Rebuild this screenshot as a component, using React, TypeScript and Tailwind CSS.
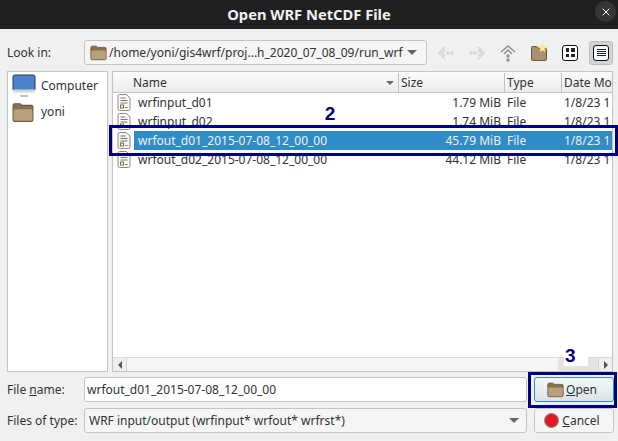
import React from 'react'
import { X } from 'lucide-react'

const files = [
  { name: 'wrfinput_d01', size: '1.79 MiB' },
  { name: 'wrfinput_d02', size: '1.74 MiB' },
  { name: 'wrfout_d01_2015-07-08_12_00_00', size: '45.79 MiB', selected: true },
  { name: 'wrfout_d02_2015-07-08_12_00_00', size: '44.12 MiB' },
]

const FolderIcon: React.FC<{ className?: string }> = ({ className }) => (
  <svg className={className} viewBox="0 0 20 20">
    <path d="M1 17V4q0-1.500 1.500-1.500h5L9 4h8.500Q19 4 19 5.500V17q0 1.500-1.500 1.500h-15Q1 18.500 1 17z" fill="#86704e" stroke="#6b5638" />
    <path d="M1.500 9q0-1.500 1.500-1.500h14q1.500 0 1.500 1.500v8q0 1-1 1h-15q-1 0-1-1z" fill="#b8a17d" />
  </svg>
)

const FileIcon: React.FC<{ light?: boolean }> = ({ light }) => (
  <svg className="w-[14px] h-[17px] shrink-0" viewBox="0 0 14 17">
    <path d="M1 2q0-1.500 1.500-1.500h7L13 4v11q0 1.500-1.500 1.500h-9Q1 16.500 1 15z" fill={light ? '#f4f4f4' : '#fbfbfb'} stroke="#8c8c8c" />
    <path d="M3.500 4h5M3.500 6.500h7M3.500 9h7" stroke="#777" strokeWidth="1" />
    <rect x="3.500" y="11" width="3" height="3" fill="none" stroke="#8a6a20" />
    <path d="M8 13.500h2.500" stroke="#777" />
  </svg>
)

const DropArrow = () => <span className="w-0 h-0 border-x-[5px] border-x-transparent border-t-[5px] border-t-[#666]" />

const Label: React.FC<{ children: React.ReactNode }> = ({ children }) => (
  <div className="w-[78px] shrink-0 text-[#2e3436]">{children}</div>
)

export default function App() {
  return (
    <div
      className="relative w-[618px] h-[441px] overflow-hidden flex flex-col bg-[#f0f0f0] text-[12px] text-[#2e3436]"
      style={{ fontFamily: '"Noto Sans", "Open Sans", sans-serif' }}
    >
      {/* Title bar */}
      <div className="relative h-[29px] shrink-0 bg-[#202020] flex items-center justify-center text-[14.700px] font-bold text-[#f0f0f0]">
        Open WRF NetCDF File
        <span className="absolute right-[2px] top-[1px] w-[21px] h-[21px] rounded-full bg-[#363636] flex items-center justify-center">
          <X className="w-[12px] h-[12px] text-white" strokeWidth={2} />
        </span>
      </div>

      {/* Look in row */}
      <div className="h-[42px] shrink-0 flex items-center pl-[7px] pr-[5px] pt-[5px]">
        <Label>Look in:</Label>
        <div className="w-[343px] h-[25px] ml-[-1px] bg-[#f5f5f5] border border-[#c4c4c4] rounded-[3px] flex items-center pl-[5px] pr-[9px]">
          <FolderIcon className="w-[17px] h-[17px] shrink-0" />
          <span className="ml-[2px] flex-1 whitespace-nowrap">/home/yoni/gis4wrf/proj...h_2020_07_08_09/run_wrf</span>
          <DropArrow />
        </div>
        <div className="flex items-center ml-[11px] gap-[15px]">
          <svg className="w-[16px] h-[16px]" viewBox="0 0 16 16" fill="none" stroke="#d4d4d4" strokeWidth="1.500">
            <path d="M7 2L1 8l6 6M7 5L4 8l3 3" />
            <circle cx="10" cy="8" r="1" />
            <circle cx="14" cy="8" r="1" />
          </svg>
          <svg className="w-[16px] h-[16px]" viewBox="0 0 16 16" fill="none" stroke="#d4d4d4" strokeWidth="1.500">
            <path d="M9 2l6 6-6 6M9 5l3 3-3 3" />
            <circle cx="6" cy="8" r="1" />
            <circle cx="2" cy="8" r="1" />
          </svg>
          <svg className="w-[16px] h-[18px]" viewBox="0 0 16 18" fill="none" stroke="#8f8f8f" strokeWidth="1.500">
            <path d="M1 8l7-6 7 6M4 10l4-4 4 4" />
            <circle cx="8" cy="12" r="1" />
            <circle cx="8" cy="16" r="1" />
          </svg>
          <svg className="w-[16px] h-[17px]" viewBox="0 0 16 17">
            <path d="M.5 15V3.500q0-1 1-1h4l1.500 1.500h7q1.500 0 1.500 1.500V15q0 1.500-1.500 1.500H2Q.5 16.500.5 15z" fill="#a89070" stroke="#6b5638" />
            <path d="M11.500 0l1.200 2.600 2.800.3-2.100 1.900.6 2.800-2.500-1.400-2.500 1.400.6-2.800-2.100-1.900 2.800-.3z" fill="#fdf28a" stroke="#f5e050" strokeWidth=".5" />
          </svg>
          <div className="w-[16px] h-[16px] bg-white border-[1.500px] border-[#111] rounded-[3px] grid grid-cols-2 gap-[2px] p-[2.500px]">
            <span className="bg-[#222]" />
            <span className="bg-[#222]" />
            <span className="bg-[#222]" />
            <span className="bg-[#222]" />
          </div>
          <div className="w-[24px] h-[24px] -mx-[4px] bg-[#d4d4d4] border border-[#bdbdbd] rounded-[3px] flex items-center justify-center">
            <div className="w-[16px] h-[16px] bg-[#f4fbff] border-[1.500px] border-[#111] rounded-[3px] flex flex-col justify-center gap-[1px] px-[2.500px]">
              <span className="h-px bg-[#222]" />
              <span className="h-px bg-[#222]" />
              <span className="h-px bg-[#222]" />
              <span className="h-px bg-[#222]" />
            </div>
          </div>
        </div>
      </div>

      {/* Side panel and file list */}
      <div className="h-[301px] shrink-0 flex pl-[7px] pr-[5px] gap-[4px]">
        <div className="w-[101px] shrink-0 bg-white border border-[#c4c4c4]">
          <div className="h-[28px] flex items-center pl-[4px]">
            <svg className="w-[24px] h-[24px] shrink-0" viewBox="0 0 24 24">
              <rect x="1" y="1" width="22" height="16" rx="1.500" fill="#4b84cc" stroke="#2f3a4c" />
              <rect x="1" y="15.500" width="22" height="3" fill="#d6d6d6" />
              <rect x="8" y="21" width="8" height="2" rx="1" fill="#bdbdbd" />
            </svg>
            <span className="ml-[5px]">Computer</span>
          </div>
          <div className="h-[23px] flex items-center pl-[4px]">
            <FolderIcon className="w-[22px] h-[22px] shrink-0" />
            <span className="ml-[7px]">yoni</span>
          </div>
        </div>

        <div className="flex-1 min-w-0 bg-white border border-[#c4c4c4] flex flex-col">
          <div className="h-[21px] shrink-0 flex pt-[1px] bg-gradient-to-b from-[#fbfbfb] to-[#ececec] border-b border-[#c4c4c4]">
            <div className="relative w-[286px] shrink-0 pl-[20px] flex items-center border-r border-[#c4c4c4]">
              Name
              <span className="absolute right-[4px] top-[8px] w-0 h-0 border-x-[4px] border-x-transparent border-t-[4px] border-t-[#666]" />
            </div>
            <div className="w-[106px] shrink-0 pl-[2px] flex items-center border-r border-[#c4c4c4]">Size</div>
            <div className="w-[57px] shrink-0 pl-[2px] flex items-center border-r border-[#c4c4c4]">Type</div>
            <div className="pl-[2px] flex items-center whitespace-nowrap overflow-hidden">Date Mo</div>
          </div>
          <div className="flex-1 min-h-0">
            {files.map((f) => (
              <div key={f.name} className="h-[19px] flex items-center overflow-hidden">
                <div className="w-[21px] shrink-0 pl-[4px]">
                  <FileIcon light={f.selected} />
                </div>
                <div className={`flex-1 min-w-0 h-full flex items-center ${f.selected ? 'bg-[#308cc6] text-[#f0f0f0]' : ''}`}>
                  <div className="w-[265px] shrink-0 pl-[4px] whitespace-nowrap">{f.name}</div>
                  <div className="w-[106px] shrink-0 pr-[4px] text-right">{f.size}</div>
                  <div className="w-[57px] shrink-0 pl-[2px]">File</div>
                  <div className="flex-1 pl-[2px] whitespace-nowrap overflow-hidden">1/8/23 1</div>
                </div>
              </div>
            ))}
          </div>
          {/* Horizontal scrollbar */}
          <div className="h-[14px] shrink-0 flex items-center bg-[#f0f0f0] border-t border-[#dcdcdc]">
            <div className="w-[14px] h-full flex items-center justify-center border-r border-[#d4d4d4]">
              <span className="w-0 h-0 border-y-[4px] border-y-transparent border-r-[4px] border-r-[#555]" />
            </div>
            <div className="w-[431px] h-full bg-[#f5f5f5]" />
            <div className="flex-1 h-full bg-[#e4e4e4]" />
            <div className="w-[14px] h-full flex items-center justify-center border-l border-[#d4d4d4]">
              <span className="w-0 h-0 border-y-[4px] border-y-transparent border-l-[4px] border-l-[#555]" />
            </div>
          </div>
        </div>
      </div>

      {/* File name */}
      <div className="mt-[5px] h-[25px] shrink-0 flex items-center pl-[7px] pr-[4px]">
        <Label>
          File <span className="underline">n</span>ame:
        </Label>
        <div className="w-[443px] h-full ml-[-1px] bg-white border border-[#c4c4c4] rounded-[3px] flex items-center pl-[2px] whitespace-nowrap">
          wrfout_d01_2015-07-08_12_00_00
        </div>
        <div className="w-[80px] h-full ml-[7px] pr-[4px] bg-gradient-to-b from-[#f4f8fa] to-[#dde4e8] border border-[#308cc6] rounded-[3px] flex items-center justify-center">
          <FolderIcon className="w-[17px] h-[17px] shrink-0" />
          <span className="ml-[2px]">
            <span className="underline">O</span>pen
          </span>
        </div>
      </div>

      {/* Files of type */}
      <div className="mt-[6px] h-[25px] shrink-0 flex items-center pl-[7px] pr-[4px]">
        <Label>Files of type:</Label>
        <div className="w-[443px] h-full ml-[-1px] bg-[#f5f5f5] border border-[#c4c4c4] rounded-[3px] flex items-center pl-[4px] pr-[7px]">
          <span className="flex-1 whitespace-nowrap">WRF input/output (wrfinput* wrfout* wrfrst*)</span>
          <DropArrow />
        </div>
        <div className="w-[80px] h-full ml-[7px] pr-[4px] bg-[#f5f5f5] border border-[#c4c4c4] rounded-[3px] flex items-center justify-center">
          <span className="w-[15px] h-[15px] rounded-full bg-[#e01b24] border border-[#8a8a8a] shrink-0" />
          <span className="ml-[3px]">
            <span className="underline">C</span>ancel
          </span>
        </div>
      </div>

      {/* Annotations drawn on top of the dialog */}
      <div className="absolute left-[109px] top-[125px] w-[509px] h-[31px] border-[3px] border-[#000080]" />
      <div className="absolute left-[528px] top-[372px] w-[89px] h-[36px] border-[3px] border-[#000080]" />
      <div className="absolute left-[320px] top-[103px] w-[20px] h-[22px] flex items-center justify-center font-bold text-[19px] text-[#000080]" style={{ fontFamily: '"Liberation Sans", sans-serif' }}>2</div>
      <div className="absolute left-[564px] top-[346px] w-[24px] h-[20px] pl-[1px] bg-white flex items-center font-bold text-[19px] text-[#000080]" style={{ fontFamily: '"Liberation Sans", sans-serif' }}>3</div>
    </div>
  )
}
